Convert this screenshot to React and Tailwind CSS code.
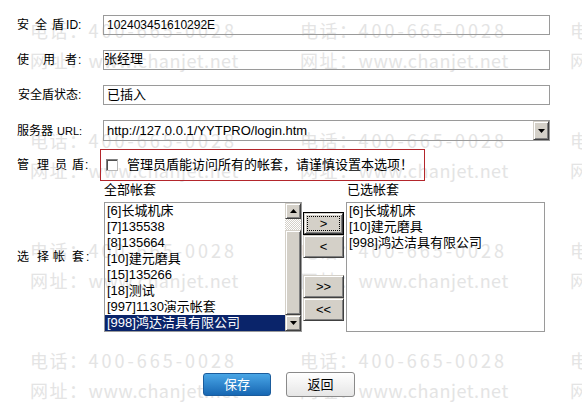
import React from 'react';

const bevel =
  'bg-[#d4d0c8] border border-t-[#d4d0c8] border-l-[#d4d0c8] border-r-[#404040] border-b-[#404040] shadow-[inset_1px_1px_0_#ffffff,inset_-1px_-1px_0_#808080]';

const allSets = [
  '[6]长城机床',
  '[7]135538',
  '[8]135664',
  '[10]建元磨具',
  '[15]135266',
  '[18]测试',
  '[997]1130演示帐套',
  '[998]鸿达洁具有限公司',
];

const chosenSets = ['[6]长城机床', '[10]建元磨具', '[998]鸿达洁具有限公司'];

const Arrow = ({ up }) => (
  <svg width="7" height="4" viewBox="0 0 7 4" className="block">
    <polygon points={up ? '0,4 7,4 3.5,0' : '0,0 7,0 3.5,4'} fill="#000" />
  </svg>
);

const Watermark = () => (
  <div className="pointer-events-none absolute left-[30px] top-[15px] grid grid-cols-[repeat(3,270px)] auto-rows-[110px] font-['Noto_Sans_CJK_SC',sans-serif] text-[18px] leading-[30px] text-[#e4e4e4]">
    {Array.from({ length: 12 }).map((_, i) => (
      <div key={i} className="whitespace-nowrap">
        <div>
          <span className="tracking-[1.5px]">电话：</span>
          <span className="tracking-[3px]">400-665-0028</span>
        </div>
        <div>
          <span className="tracking-[1.5px]">网址：</span>
          <span className="tracking-[0.5px]">www.chanjet.net</span>
        </div>
      </div>
    ))}
  </div>
);

const Row = ({ label, children, className = '' }) => (
  <div className={'flex items-center ' + className}>
    <div className="flex w-[100px] shrink-0 items-baseline pl-[17px] text-[12px] leading-[16px] whitespace-nowrap">
      {label}
    </div>
    {children}
  </div>
);

const MoveButton = ({ children, focused }) =>
  focused ? (
    <div className="h-[23px] w-[41px] border border-black">
      <div className={'flex h-full w-full items-center justify-center p-[2px] ' + bevel}>
        <div className="flex h-full w-full items-center justify-center border border-dotted border-black text-[13px] leading-none">
          {children}
        </div>
      </div>
    </div>
  ) : (
    <div className={'flex h-[23px] w-[41px] items-center justify-center text-[13px] leading-none ' + bevel}>
      {children}
    </div>
  );

export default function App() {
  return (
    <div className="relative h-[419px] w-[582px] overflow-hidden bg-white font-['Liberation_Sans','Noto_Sans_CJK_SC',sans-serif] text-black">
      <Watermark />

      <div className="relative pt-[15px]">
        <Row
          label={
            <>
              <span>安</span>
              <span className="ml-[6px]">全</span>
              <span className="ml-[5px]">盾</span>
              <span className="ml-[2px]">ID:</span>
            </>
          }
        >
          <div className="ml-[3px] h-[20px] w-[447px] border border-[#9a9a9a] pl-[3px] text-[12px] leading-[18px]">
            102403451610292E
          </div>
        </Row>

        <Row
          className="mt-[15px]"
          label={
            <>
              <span>使</span>
              <span className="ml-[14px]">用</span>
              <span className="ml-[10px]">者</span>
              <span className="ml-[1px]">:</span>
            </>
          }
        >
          <div className="ml-[3px] h-[20px] w-[447px] border border-[#9a9a9a] text-[13px] leading-[16px]">
            张经理
          </div>
        </Row>

        <Row className="mt-[15px]" label={<span className="ml-[1px]">安全盾状态:</span>}>
          <div className="ml-[3px] h-[20px] w-[447px] border border-[#9a9a9a] pl-[3px] text-[13px] leading-[17px]">
            已插入
          </div>
        </Row>

        <Row
          className="mt-[15px]"
          label={
            <>
              <span>服务器</span>
              <span className="ml-[4px] text-[11px]">URL:</span>
            </>
          }
        >
          <div className="ml-[3px] flex h-[21px] w-[447px] items-center border border-[#9a9a9a]">
            <span className="pl-[3px] text-[13px] leading-[19px]">http://127.0.0.1/YYTPRO/login.htm</span>
            <div className={'ml-auto flex h-[19px] w-[16px] items-center justify-center ' + bevel}>
              <Arrow />
            </div>
          </div>
        </Row>

        <Row
          className="mt-[8px]"
          label={
            <>
              <span>管</span>
              <span className="ml-[8px]">理</span>
              <span className="ml-[6px]">员</span>
              <span className="ml-[5px]">盾</span>
              <span className="ml-[1px]">:</span>
            </>
          }
        >
          <div className="flex h-[32px] w-[325px] items-center border border-[#b3262c] pl-[5px]">
            <span className="h-[12px] w-[12px] border border-t-[#808080] border-l-[#808080] border-r-[#b8b8b8] border-b-[#b8b8b8] bg-white shadow-[inset_1px_1px_0_#505050]" />
            <span className="ml-[9px] text-[13px] leading-[16px] whitespace-nowrap">
              管理员盾能访问所有的帐套，请谨慎设置本选项！
            </span>
          </div>
        </Row>

        <Row
          label={
            <>
              <span>选</span>
              <span className="ml-[8px]">择</span>
              <span className="ml-[4px]">帐</span>
              <span className="ml-[7px]">套</span>
              <span className="ml-[2px]">:</span>
            </>
          }
        >
          <div className="flex pl-[4px]">
            <div className="w-[198px]">
              <div className="h-[21px] pt-[1px] text-[13px] leading-[16px]">全部帐套</div>
              <div className="flex h-[130px] border border-[#9a9a9a]">
                <div className="flex-1 text-[13px] leading-[16px]">
                  {allSets.map((s, i) => (
                    <div
                      key={s}
                      className={
                        'h-[16px] pl-[2px] whitespace-nowrap ' +
                        (i === allSets.length - 1 ? 'bg-[#0a246a] text-white' : '')
                      }
                    >
                      {s}
                    </div>
                  ))}
                </div>
                <div className="flex w-[16px] flex-col">
                  <div className={'flex h-[16px] items-center justify-center ' + bevel}>
                    <Arrow up />
                  </div>
                  <div className="h-[11px] bg-[repeating-conic-gradient(#d4d0c8_0%_25%,#ffffff_0%_50%)] [background-size:2px_2px]" />
                  <div className={'h-[85px] ' + bevel} />
                  <div className={'flex h-[16px] items-center justify-center ' + bevel}>
                    <Arrow />
                  </div>
                </div>
              </div>
            </div>

            <div className="ml-[1px] flex w-[41px] flex-col pt-[31px]">
              <MoveButton focused>&gt;</MoveButton>
              <MoveButton>&lt;</MoveButton>
              <div className="mt-[17px]">
                <MoveButton>&gt;&gt;</MoveButton>
              </div>
              <MoveButton>&lt;&lt;</MoveButton>
            </div>

            <div className="ml-[2px] w-[199px]">
              <div className="h-[21px] pt-[1px] pl-[1px] text-[13px] leading-[16px]">已选帐套</div>
              <div className="h-[130px] border border-[#9a9a9a] text-[13px] leading-[16px]">
                {chosenSets.map((s) => (
                  <div key={s} className="h-[16px] pl-[2px] whitespace-nowrap">
                    {s}
                  </div>
                ))}
              </div>
            </div>
          </div>
        </Row>

        <div className="mt-[40px] flex items-center gap-[15px] pl-[203px]">
          <button className="h-[23px] w-[68px] rounded-[3px] border border-[#1b5c9c] bg-gradient-to-b from-[#49a6e6] to-[#1667b3] text-[13px] leading-none text-white">
            保存
          </button>
          <button className="h-[25px] w-[69px] rounded-[3px] border border-[#8a8a8a] bg-gradient-to-b from-white to-[#e6e6e6] text-[13px] leading-none text-black">
            返回
          </button>
        </div>
      </div>
    </div>
  );
}
